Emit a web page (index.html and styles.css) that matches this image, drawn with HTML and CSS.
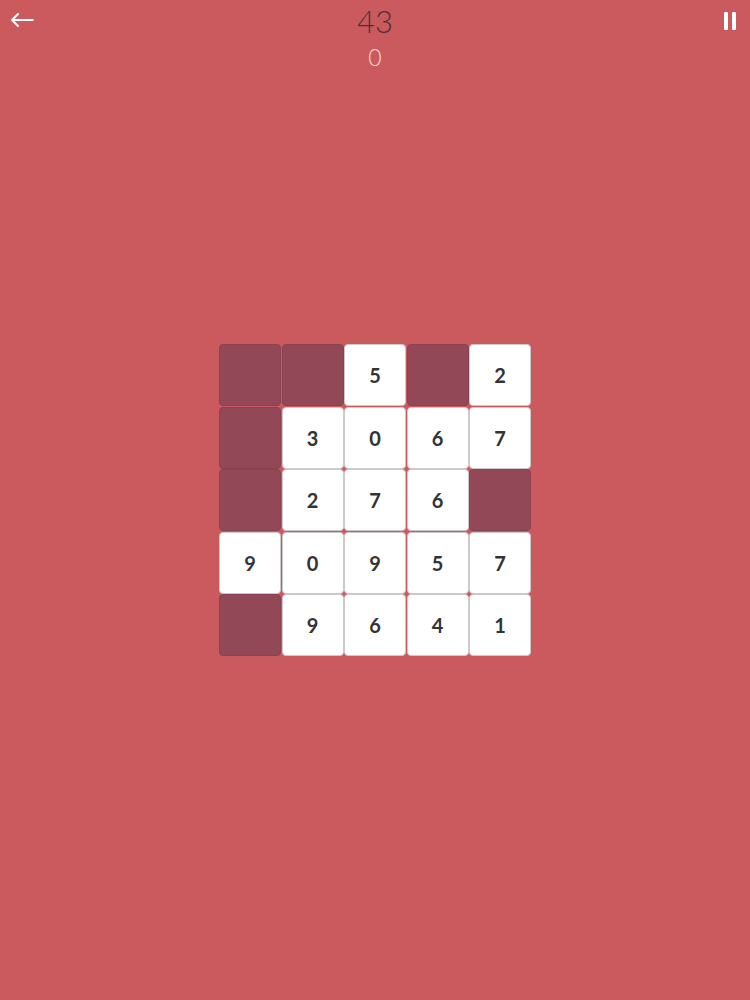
FILE: index.html
```html
<!DOCTYPE html>
<html>
<head>
<meta charset="utf-8">
<link rel="stylesheet" href="styles.css">
</head>
<body>
<div class="screen">
  <header class="topbar">
    <div class="back">
      <svg width="26" height="16" viewBox="0 0 26 16"><path d="M24 8H3M9 2L3 8l6 6" fill="none" stroke="#fff" stroke-width="1.8" stroke-linecap="round" stroke-linejoin="round"/></svg>
    </div>
    <div class="scores">
      <div class="score">43</div>
      <div class="sub">0</div>
    </div>
    <div class="pause"><span></span><span></span></div>
  </header>
  <main class="board-wrap">
    <div class="board">
      <div class="tile dark"></div><div class="tile dark"></div><div class="tile">5</div><div class="tile dark"></div><div class="tile">2</div>
      <div class="tile dark"></div><div class="tile">3</div><div class="tile">0</div><div class="tile">6</div><div class="tile">7</div>
      <div class="tile dark"></div><div class="tile">2</div><div class="tile">7</div><div class="tile">6</div><div class="tile dark"></div>
      <div class="tile">9</div><div class="tile">0</div><div class="tile">9</div><div class="tile">5</div><div class="tile">7</div>
      <div class="tile dark"></div><div class="tile">9</div><div class="tile">6</div><div class="tile">4</div><div class="tile">1</div>
    </div>
  </main>
</div>
</body>
</html>
```
FILE: styles.css
```css
html, body { margin: 0; padding: 0; }
body { background: #cb5a5e; font-family: Lato, "Open Sans", sans-serif; }
.screen { width: 750px; height: 1000px; display: flex; flex-direction: column; }
.topbar { display: flex; justify-content: space-between; align-items: flex-start; height: 80px; }
.back { width: 60px; box-sizing: border-box; padding: 12px 0 0 9px; }
.back svg { display: block; }
.scores { display: flex; flex-direction: column; align-items: center; padding-top: 4px; }
.score { font-family: Lato, sans-serif; font-weight: 300; font-size: 31px; line-height: 34px; color: #4a3138; }
.sub { font-family: Lato, sans-serif; font-weight: 300; font-size: 23px; line-height: 30px; color: #f6d8d0; margin-top: 4px; }
.pause { width: 60px; display: flex; justify-content: flex-end; gap: 4px; padding: 12px 14px 0 0; box-sizing: border-box; }
.pause span { width: 4px; height: 18px; background: #fff; border-radius: 1px; }
.board-wrap { display: flex; justify-content: center; padding-top: 264px; }
.board { display: grid; grid-template-columns: repeat(5, 62px); grid-auto-rows: 62px; gap: 0.5px; }
.tile { background: #fff; border: 1px solid #cfc8c8; border-radius: 4px; box-sizing: border-box; display: flex; align-items: center; justify-content: center; font-family: Lato, sans-serif; font-weight: 700; font-size: 20px; color: #333; }
.tile.dark { background: #924857; border-color: #8a4251; }
```
